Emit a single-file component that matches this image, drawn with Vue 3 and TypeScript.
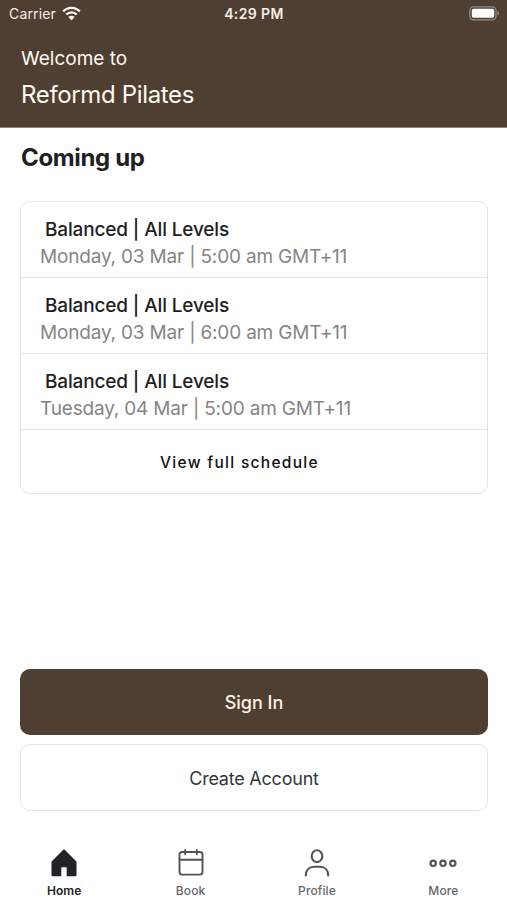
<script setup lang="ts">
interface ScheduledClass {
  title: string
  time: string
}

interface Tab {
  id: 'home' | 'book' | 'profile' | 'more'
  label: string
}

const classes: ScheduledClass[] = [
  { title: 'Balanced | All Levels', time: 'Monday, 03 Mar | 5:00 am GMT+11' },
  { title: 'Balanced | All Levels', time: 'Monday, 03 Mar | 6:00 am GMT+11' },
  { title: 'Balanced | All Levels', time: 'Tuesday, 04 Mar | 5:00 am GMT+11' },
]

const tabs: Tab[] = [
  { id: 'home', label: 'Home' },
  { id: 'book', label: 'Book' },
  { id: 'profile', label: 'Profile' },
  { id: 'more', label: 'More' },
]
const activeTab: Tab['id'] = 'home'
</script>

<template>
  <div class="screen">
    <header class="header">
      <div class="status">
        <div class="carrier">
          <span>Carrier</span>
          <svg class="wifi" width="19" height="15" viewBox="0 0 19 15">
            <g fill="none" stroke="#fffaf3" stroke-width="2.3">
              <path d="M1.2 5.4C5.8.7 13.2.7 17.8 5.4" />
              <path d="M4.3 8.5c2.9-2.9 7.5-2.9 10.4 0" />
            </g>
            <path d="M9.5 14.3 6.3 11c1.8-1.7 4.6-1.7 6.4 0z" fill="#fffaf3" />
          </svg>
        </div>
        <span class="clock">4:29 PM</span>
        <svg class="battery" width="31" height="15" viewBox="0 0 31 15">
          <rect x=".8" y=".8" width="26.2" height="13" rx="3.8" fill="none" stroke="#958b82" stroke-width="1.3" />
          <rect x="2.8" y="2.8" width="22.4" height="9" rx="1.8" fill="#fff" />
          <path d="M28.5 5v4.6c2.1-.9 2.1-3.7 0-4.6z" fill="#958b82" />
        </svg>
      </div>
      <p class="welcome">Welcome to</p>
      <h1 class="studio">Reformd Pilates</h1>
    </header>

    <main class="content">
      <h2 class="heading">Coming up</h2>
      <section class="card">
        <article v-for="(item, index) in classes" :key="index" class="row">
          <h3 class="title">{{ item.title }}</h3>
          <p class="time">{{ item.time }}</p>
        </article>
        <button class="schedule" type="button"><span>View full schedule</span></button>
      </section>
      <div class="actions">
        <button class="button primary" type="button"><span>Sign In</span></button>
        <button class="button secondary" type="button"><span>Create Account</span></button>
      </div>
    </main>

    <nav class="tabs">
      <a v-for="tab in tabs" :key="tab.id" class="tab" :class="{ active: tab.id === activeTab }">
        <svg v-if="tab.id === 'home'" class="icon" width="30" height="30" viewBox="0 0 30 30">
          <path d="M14.3 1.8q.7-.6 1.4 0l11 11q.8.8.8 1.6v12.8q0 1-1 1h-8.8v-8.1q0-.8-.8-.8h-3.8q-.8 0-.8.8v8.1H3.5q-1 0-1-1V14.4q0-.8.8-1.6z" fill="#202427" />
        </svg>
        <svg v-else-if="tab.id === 'book'" class="icon" width="30" height="30" viewBox="0 0 30 30">
          <g fill="none" stroke="#515457" stroke-width="1.9" stroke-linecap="round">
            <rect x="3.5" y="4" width="23" height="22.6" rx="2.6" />
            <path d="M3.5 11.8h23M9.2 1.9v4.3M20.8 1.9v4.3" />
          </g>
        </svg>
        <svg v-else-if="tab.id === 'profile'" class="icon" width="30" height="30" viewBox="0 0 30 30">
          <g fill="none" stroke="#515457" stroke-width="2.1" stroke-linecap="round">
            <ellipse cx="15" cy="8.2" rx="5.3" ry="5.9" />
            <path d="M3.8 27.5c0-5.4 3.2-8.7 8.1-8.7h6.2c4.9 0 8.1 3.3 8.1 8.7" />
          </g>
        </svg>
        <svg v-else class="icon" width="30" height="30" viewBox="0 0 30 30">
          <g fill="none" stroke="#515457" stroke-width="2.2">
            <circle cx="5.2" cy="15.3" r="2.7" />
            <circle cx="15" cy="15.3" r="2.7" />
            <circle cx="24.8" cy="15.3" r="2.7" />
          </g>
        </svg>
        <span>{{ tab.label }}</span>
      </a>
    </nav>
  </div>
</template>

<style>
body {
  background: #fff;
}
</style>

<style scoped>
.screen {
  display: flex;
  flex-direction: column;
  width: 507px;
  height: 900px;
  box-sizing: border-box;
  overflow: hidden;
  background: #fff;
  color: #1e2022;
  font-family: Inter, "Liberation Sans", sans-serif;
}

h1, h2, h3, p {
  margin: 0;
}

button {
  padding: 0;
  border: 0;
  background: none;
  color: inherit;
  font-family: inherit;
}

.header {
  flex: none;
  box-sizing: border-box;
  height: 128px;
  padding: 0 21px;
  border-bottom: 1px solid #8d827a;
  background: #4f3e32;
  color: #fffaf3;
}

.status {
  display: grid;
  grid-template-columns: 1fr auto 1fr;
  align-items: center;
  height: 28px;
  margin: 0 -14px 0 -12px;
  color: #f5efe8;
}

.carrier {
  display: flex;
  align-items: center;
  gap: 6px;
  font-size: 14px;
  letter-spacing: 0.15px;
  line-height: 28px;
}

.wifi {
  margin-top: -2px;
}

.clock {
  margin-left: -1px;
  font-size: 14px;
  font-weight: 600;
  letter-spacing: 0.4px;
  line-height: 28px;
}

.battery {
  justify-self: end;
  margin-top: -1px;
}

.welcome {
  margin-top: 17px;
  font-size: 19px;
  line-height: 28px;
}

.studio {
  margin-top: 6px;
  font-size: 24px;
  font-weight: 400;
  letter-spacing: -0.35px;
  line-height: 32px;
}

.content {
  display: flex;
  flex: 1;
  flex-direction: column;
  padding: 0 19px 0 20px;
}

.heading {
  margin: 13px 0 0 1px;
  font-size: 24px;
  font-weight: 700;
  letter-spacing: -0.35px;
  line-height: 34px;
}

.card {
  box-sizing: border-box;
  height: 293px;
  margin-top: 26px;
  border: 1px solid #e3e3e3;
  border-radius: 10px;
}

.row {
  box-sizing: border-box;
  height: 76px;
  padding: 14px 19px 0;
  border-bottom: 1px solid #e5e5e5;
}

.title {
  padding-left: 5px;
  font-size: 19px;
  font-weight: 500;
  letter-spacing: -0.15px;
  line-height: 27px;
}

.time {
  color: #858585;
  font-size: 19px;
  letter-spacing: -0.18px;
  line-height: 27px;
}

.schedule {
  display: block;
  width: 100%;
  height: 63px;
  padding: 1px 29px 0 0;
  color: #111;
  font-size: 15.5px;
  font-weight: 500;
  letter-spacing: 1.3px;
}

.actions {
  display: flex;
  flex-direction: column;
  gap: 9px;
  margin-top: auto;
}

.button {
  box-sizing: border-box;
  height: 67px;
  border-radius: 10px;
  font-size: 18px;
}

.primary {
  height: 66px;
  background: #4f3e32;
  color: #fcf2e8;
  font-weight: 500;
}

.secondary {
  padding-top: 1px;
  border: 1px solid #e2e2e2;
  color: #35373a;
  letter-spacing: -0.22px;
}

.tabs {
  display: grid;
  flex: none;
  grid-template-columns: repeat(4, 126.4px);
  box-sizing: border-box;
  height: 89px;
  padding: 37px 0 0 1px;
}

.tab {
  display: flex;
  flex-direction: column;
  align-items: center;
  color: #64676a;
  font-size: 12px;
  font-weight: 500;
  letter-spacing: 0.1px;
  line-height: 16px;
}

.icon {
  flex: none;
  margin-bottom: 5px;
}

.active {
  color: #202427;
  font-weight: 600;
}
</style>
